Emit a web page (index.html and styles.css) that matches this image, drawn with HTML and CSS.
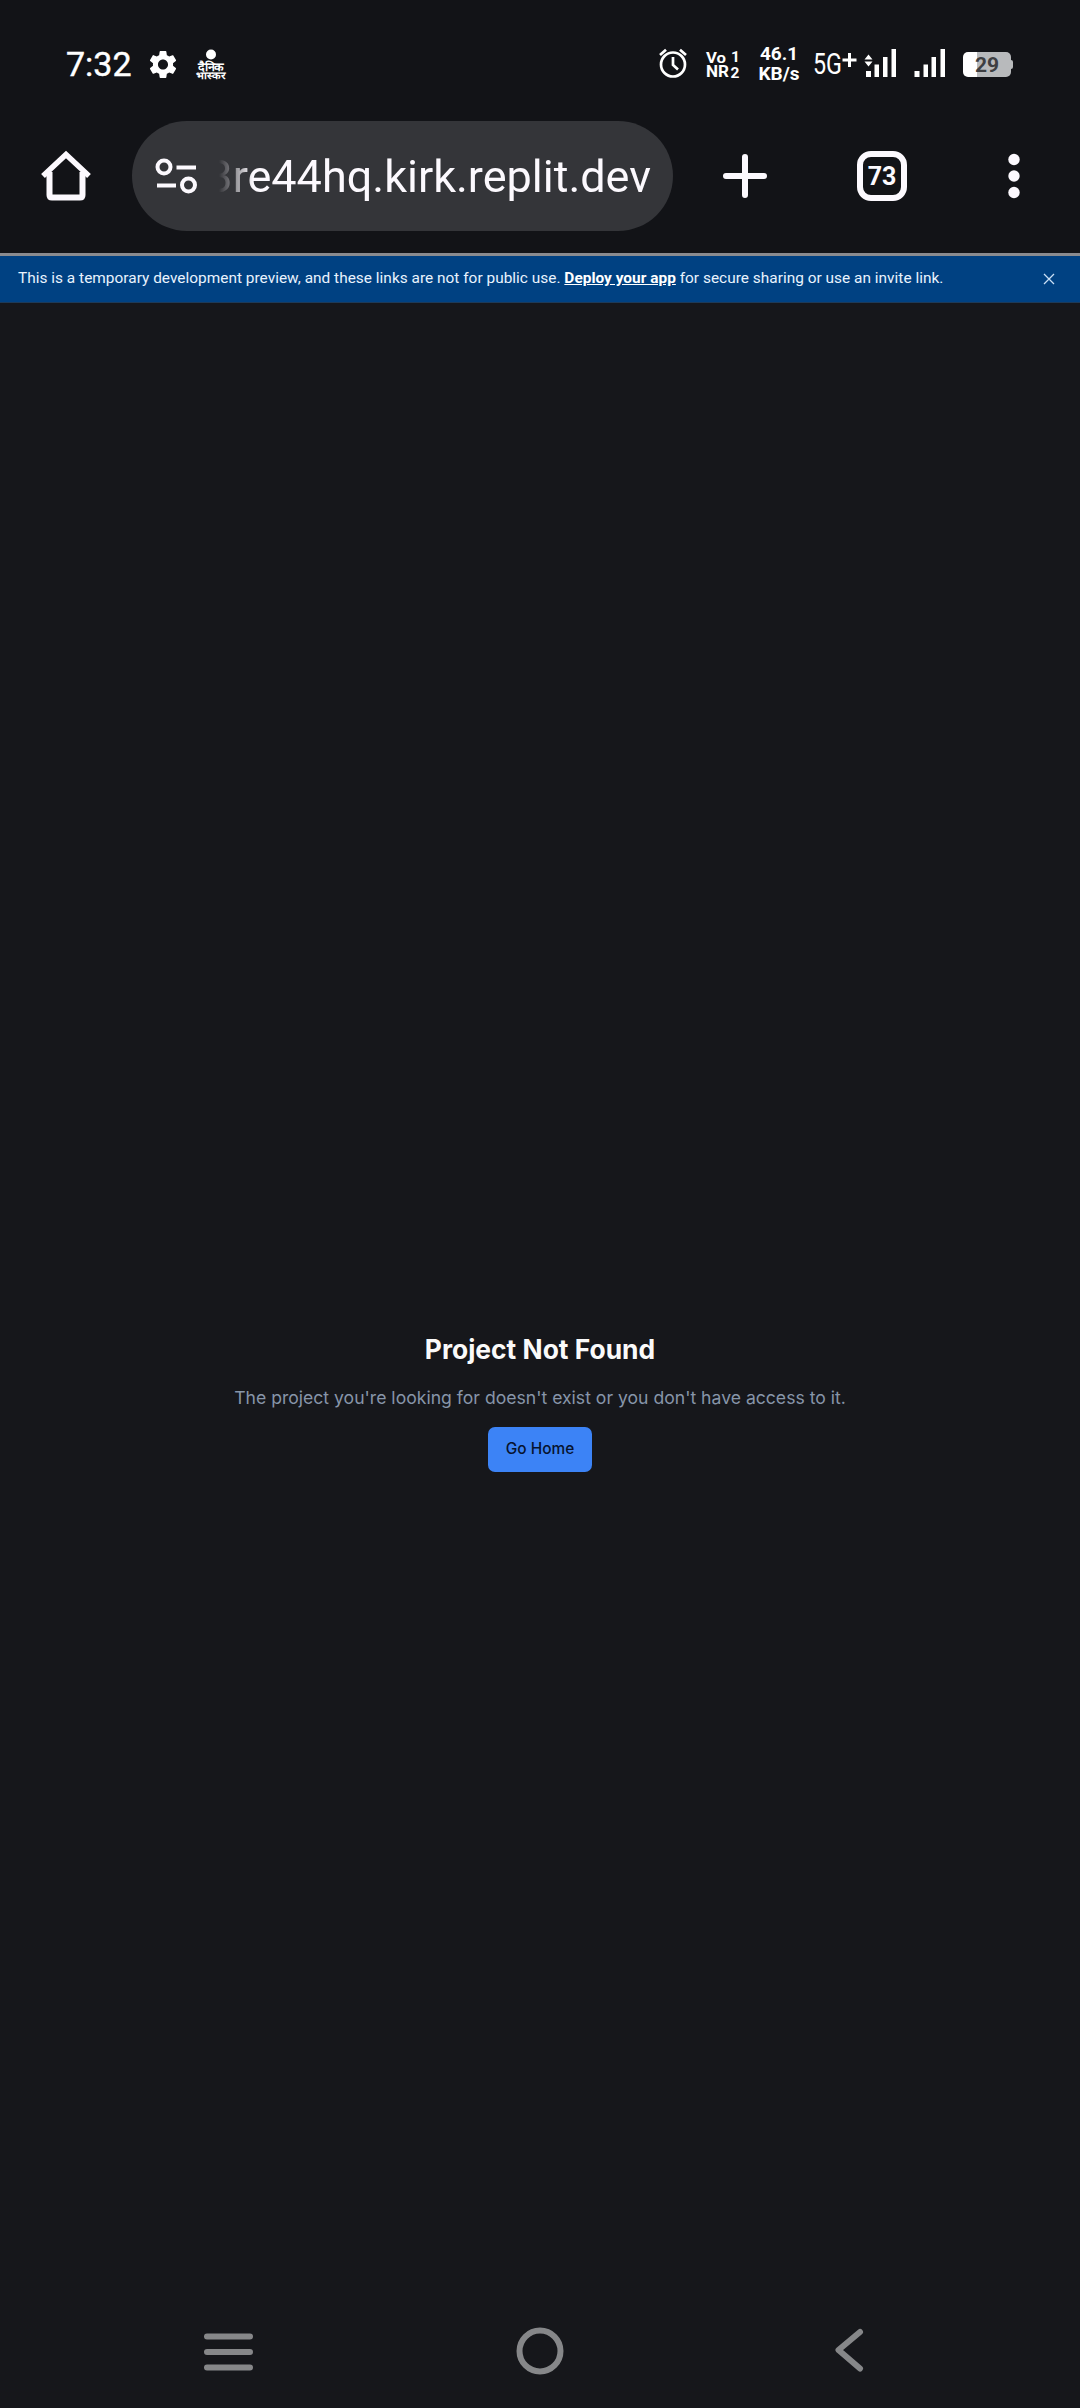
FILE: index.html
```html
<!DOCTYPE html>
<html lang="en">
<head>
<meta charset="utf-8">
<title>Project Not Found</title>
<link rel="stylesheet" href="styles.css">
</head>
<body>
<div class="screen">
  <header class="status">
    <span class="clock">7:32</span>
    <svg class="gear" viewBox="2 2 20 20" width="28" height="29"><path fill="#fff" d="M19.14 12.94c.04-.3.06-.61.06-.94 0-.32-.02-.64-.07-.94l2.03-1.58c.18-.14.23-.41.12-.61l-1.92-3.32c-.12-.22-.37-.29-.59-.22l-2.39.96c-.5-.38-1.03-.7-1.62-.94l-.36-2.54c-.04-.24-.24-.41-.48-.41h-3.84c-.24 0-.43.17-.47.41l-.36 2.54c-.59.24-1.13.57-1.62.94l-2.39-.96c-.22-.08-.47 0-.59.22L2.74 8.87c-.12.21-.08.47.12.61l2.03 1.58c-.05.3-.09.63-.09.94s.02.64.07.94l-2.03 1.58c-.18.14-.23.41-.12.61l1.92 3.32c.12.22.37.29.59.22l2.39-.96c.5.38 1.03.7 1.62.94l.36 2.54c.05.24.24.41.48.41h3.84c.24 0 .44-.17.47-.41l.36-2.54c.59-.24 1.13-.56 1.62-.94l2.39.96c.22.08.47 0 .59-.22l1.92-3.32c.12-.22.07-.47-.12-.61l-2.01-1.58zM12 15.6c-1.98 0-3.6-1.62-3.6-3.6s1.62-3.6 3.6-3.6 3.6 1.62 3.6 3.6-1.62 3.6-3.6 3.6z"/></svg>
    <svg class="news" viewBox="0 0 30 32" width="30" height="32" fill="#fff"><circle cx="15" cy="5.500" r="5"/><text x="2" y="21.500" font-size="11.500" textLength="26" lengthAdjust="spacingAndGlyphs">दैनिक</text><text x="0" y="30" font-size="10" textLength="29" lengthAdjust="spacingAndGlyphs">भास्कर</text></svg>
    <svg class="alarm" viewBox="0 0 28 30" width="28" height="30" fill="none" stroke="#fff" stroke-width="2.700"><circle cx="14" cy="16.500" r="12"/><path d="M14 9v8l5 4.500M1 7l6-5.300M27 7l-6-5.300"/></svg>
    <svg class="volte" viewBox="0 0 34 30" width="34" height="30" fill="#fff"><text x="0" y="13.500" font-size="15" textLength="20" lengthAdjust="spacingAndGlyphs">Vo</text><text x="25" y="12.500" font-size="15.500">1</text><text x="0" y="27.500" font-size="16.500" textLength="23" lengthAdjust="spacingAndGlyphs">NR</text><text x="24.500" y="28.500" font-size="15.500">2</text></svg>
    <span class="rate">46.1<br>KB/s</span>
    <svg class="net" viewBox="0 0 44 30" width="44" height="30" fill="#fff"><text x="0" y="25" font-size="29" textLength="29" lengthAdjust="spacingAndGlyphs">5G</text><path d="M35 4h3v5.500h5.500v3H38V18h-3v-5.500h-5.500v-3H35z"/></svg>
    <svg class="signal" viewBox="0 0 32 29" width="32" height="29" fill="#fff"><path d="M3.500 5.500l4 5H-.5zM-.5 12.500h8l-4 5zM1 22h5v6H1zM9.500 15.500h4.500V28H9.500zM18 8h4.500v20H18zM26.500 0H31v28h-4.500z"/></svg>
    <svg class="signal-two" viewBox="0 0 32 29" width="32" height="29" fill="#fff"><path d="M.5 22h5v6h-5zM9.500 15.500H14V28H9.500zM17.500 8H22v20h-4.500zM26.500 0H31v28h-4.500z"/></svg>
    <div class="battery"><span>29</span></div>
  </header>

  <nav class="toolbar">
    <svg class="home" viewBox="0 0 50 50" width="50" height="50" fill="none" stroke="#fcf9fe" stroke-width="6"><path d="M2 25L25 3.500 48 25" stroke-width="5.500"/><path d="M8.500 21v23q0 2.500 2.500 2.500h28q2.500 0 2.500-2.500V21"/></svg>
    <div class="address">
      <svg class="tune" viewBox="0 0 42 36" width="42" height="36" fill="none" stroke="#fcf9fe" stroke-width="4"><circle cx="9" cy="9" r="6.500"/><circle cx="33.500" cy="27" r="6.500"/><path d="M21.500 9.500H41M2 27.500h19"/></svg>
      <div class="url"><span>3re44hq.kirk.replit.dev</span></div>
    </div>
    <svg class="plus" viewBox="0 0 44 44" width="44" height="44" stroke="#fcf9fe" stroke-width="6" stroke-linecap="round"><path d="M3 22h38M22 3v38"/></svg>
    <div class="tabs">73</div>
    <svg class="more" viewBox="0 0 12 46" width="12" height="46" fill="#fcf9fe"><circle cx="6" cy="6.500" r="5.700"/><circle cx="6" cy="23" r="5.700"/><circle cx="6" cy="39.500" r="5.700"/></svg>
  </nav>

  <div class="banner">
    <p>This is a temporary development preview, and these links are not for public use. <a>Deploy your app</a> for secure sharing or use an invite link.</p>
    <svg viewBox="0 0 12 12" width="12" height="12" stroke="#c9dff5" stroke-width="1.300"><path d="M1 1l10 10M11 1L1 11"/></svg>
  </div>

  <main class="content">
    <h1>Project Not Found</h1>
    <p>The project you're looking for doesn't exist or you don't have access to it.</p>
    <button>Go Home</button>
  </main>

  <footer class="system-nav">
    <svg class="recents" viewBox="0 0 49 38" width="49" height="38" stroke="#868789" stroke-width="6" stroke-linecap="round"><path d="M3 3.500h43M3 19h43M3 34.500h43"/></svg>
    <svg class="circle" viewBox="0 0 48 48" width="48" height="48" fill="none" stroke="#868789" stroke-width="6"><circle cx="24" cy="24" r="20.500"/></svg>
    <svg class="back" viewBox="0 0 28 44" width="28" height="44" fill="none" stroke="#868789" stroke-width="6" stroke-linecap="round" stroke-linejoin="round"><path d="M25 4L3.500 22 25 40.500"/></svg>
  </footer>
</div>
</body>
</html>
```
FILE: styles.css
```css
* { box-sizing: border-box; }
body { margin: 0; background: #16171b; font-family: Roboto, "Liberation Sans", sans-serif; }
svg { display: block; flex: none; overflow: visible; }
h1, p { margin: 0; }
.screen { width: 1080px; height: 2408px; display: flex; flex-direction: column; overflow: hidden; }

.status { height: 121px; display: flex; align-items: flex-start; background: #121317; color: #fff; white-space: nowrap; }
.clock { width: 82px; margin: 44px 0 0 66px; font-size: 34px; line-height: 40px; -webkit-text-stroke: .4px #fff; }
.gear { margin: 50px 0 0 1px; }
.news { margin: 49px 0 0 19px; font-weight: 700; }
.alarm { margin: 48px 0 0 433px; }
.volte { margin: 49px 0 0 19px; font-weight: 700; }
.rate { width: 42px; margin: 44px 0 0 18px; font-size: 19px; line-height: 20px; font-weight: 700; text-align: center; }
.net { margin: 49px 0 0 13px; }
.signal { margin: 49px 0 0 8px; }
.signal-two { margin: 49px 0 0 17px; }
.battery { width: 48px; height: 25px; margin: 52px 0 0 17px; border-radius: 5px; background: linear-gradient(90deg, #fff 14px, #b8babc 14px); color: #3e3f42; font-size: 21px; font-weight: 700; line-height: 26px; text-align: center; position: relative; }
.battery::after { content: ""; position: absolute; left: 48px; top: 8px; width: 2px; height: 9px; background: #b8babc; border-radius: 0 2px 2px 0; }

.toolbar { height: 132px; display: flex; align-items: flex-start; background: #121317; }
.home { margin: 30px 0 0 41px; }
.address { width: 541px; height: 110px; margin-left: 41px; padding: 0 22px 0 23px; border-radius: 55px; background: #343539; display: flex; align-items: center; }
.url { width: 432px; margin-left: 22px; padding-top: 1px; display: flex; justify-content: flex-end; overflow: hidden; color: #fcf9fe; font-size: 45px; line-height: 60px; white-space: nowrap; -webkit-mask-image: linear-gradient(90deg, transparent 0, #000 34px); mask-image: linear-gradient(90deg, transparent 0, #000 34px); }
.plus { margin: 33px 0 0 50px; }
.tabs { width: 50px; height: 50px; margin: 30px 0 0 90px; border: 6px solid #fcf9fe; border-radius: 14px; color: #fcf9fe; font-size: 25px; font-weight: 700; line-height: 39px; text-align: center; }
.more { margin: 32px 0 0 101px; }

.banner { height: 50px; padding: 0 25px 0 18px; display: flex; align-items: center; justify-content: space-between; border-top: 3px solid #8a8b8f; border-bottom: 1px solid #1d3a58; background: #004182; color: #e9f3fe; font-size: 15.400px; line-height: 22px; letter-spacing: .022px; white-space: nowrap; }
.banner p { margin-bottom: 2px; }
.banner a { color: #fff; font-weight: 700; text-decoration: underline; }

.content { height: 2007px; display: flex; flex-direction: column; align-items: center; padding-top: 1029px; font-family: Inter, sans-serif; }
.content h1 { color: #fafafa; font-size: 26.400px; line-height: 35px; font-weight: 700; }
.content p { margin-top: 18px; color: #8795a9; font-size: 17.600px; line-height: 26px; white-space: nowrap; }
.content button { width: 104px; height: 45px; margin-top: 16px; padding: 0 0 1px; border: 0; border-radius: 7px; background: #3c83f6; color: #07132e; font: 500 15.400px/22px Inter, sans-serif; }

.system-nav { height: 98px; display: flex; align-items: flex-start; }
.recents { margin: 23px 0 0 204px; }
.circle { margin: 17px 0 0 263px; }
.back { margin: 18px 0 0 271px; }
```
